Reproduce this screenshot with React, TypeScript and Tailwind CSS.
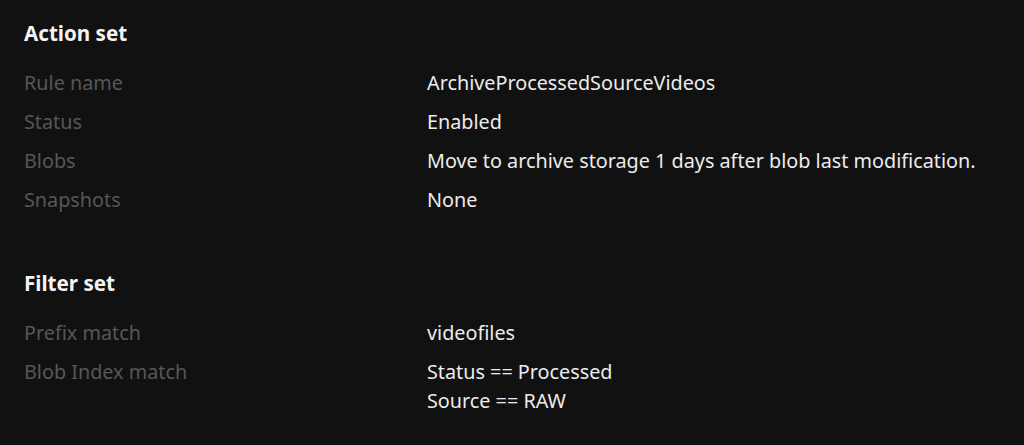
import React from "react";

const Row = ({ label, children }: { label: string; children: React.ReactNode }) => (
  <div className="flex py-[5px] leading-[29px]">
    <div className="w-[403px] shrink-0 text-[#575757]">{label}</div>
    <div className="text-[#ececec]">{children}</div>
  </div>
);

export default function App() {
  return (
    <div
      className="w-[1024px] h-[445px] bg-[#111111] pl-[24px] pt-[19px] text-[19.8px] overflow-hidden"
      style={{ fontFamily: '"Noto Sans", "Open Sans", sans-serif' }}
    >
      <div className="text-[#f4f4f4] font-bold leading-[28px] text-[20.6px]">Action set</div>
      <div className="mt-[15.5px]">
        <Row label="Rule name">ArchiveProcessedSourceVideos</Row>
        <Row label="Status">Enabled</Row>
        <Row label="Blobs">Move to archive storage 1 days after blob last modification.</Row>
        <Row label="Snapshots">None</Row>
      </div>
      <div className="mt-[50.5px] text-[#f4f4f4] font-bold leading-[28px] text-[20.6px]">Filter set</div>
      <div className="mt-[15.5px]">
        <Row label="Prefix match">videofiles</Row>
        <Row label="Blob Index match">
          <div>Status == Processed</div>
          <div>Source == RAW</div>
        </Row>
      </div>
    </div>
  );
}
